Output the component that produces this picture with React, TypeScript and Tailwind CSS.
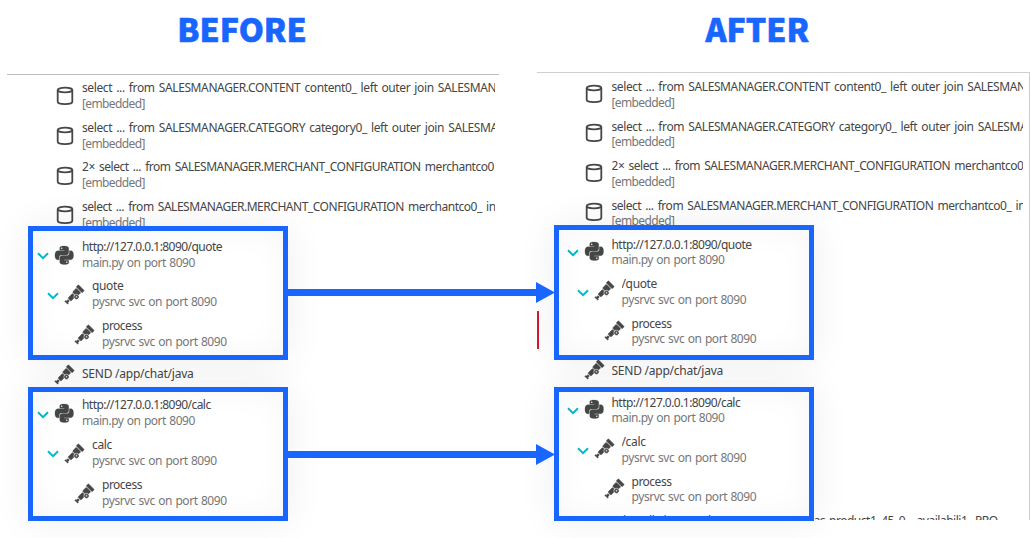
import { SiOpentelemetry, SiPython } from "react-icons/si";

type Kind = "db" | "python" | "otel";
type Entry = {
  kind: Kind;
  title: string;
  titleClass: string;
  sub?: string;
  subClass?: string;
  level?: 0 | 1 | 2;
  open?: boolean;
};

const SQL = "tracking-[-0.39px] [word-spacing:1.4px]";
const SQL_TIGHT = "tracking-[-0.47px] [word-spacing:1.5px]";
const EMB = { sub: "[embedded]", subClass: "tracking-[-0.62px]" };
const MAIN = { sub: "main.py on port 8090", subClass: "tracking-[-0.5px] [word-spacing:0.8px]" };
const SVC = { sub: "pysrvc svc on port 8090", subClass: "tracking-[-0.44px] [word-spacing:0.7px]" };
const URL_CLASS = "tracking-[-0.55px]";

function entries(prefix: string): Entry[] {
  return [
    { kind: "db", title: "select ... from SALESMANAGER.CONTENT content0_ left outer join SALESMAN", titleClass: SQL, ...EMB },
    { kind: "db", title: "select ... from SALESMANAGER.CATEGORY category0_ left outer join SALESMA", titleClass: SQL, ...EMB },
    { kind: "db", title: "2× select ... from SALESMANAGER.MERCHANT_CONFIGURATION merchantco0", titleClass: SQL_TIGHT, ...EMB },
    { kind: "db", title: "select ... from SALESMANAGER.MERCHANT_CONFIGURATION merchantco0_ in", titleClass: SQL_TIGHT, ...EMB },
    { kind: "python", title: "http://127.0.0.1:8090/quote", titleClass: URL_CLASS, ...MAIN, open: true },
    { kind: "otel", title: prefix + "quote", titleClass: "tracking-[-0.35px]", ...SVC, level: 1, open: true },
    { kind: "otel", title: "process", titleClass: "tracking-[-0.5px]", ...SVC, level: 2 },
    { kind: "otel", title: "SEND /app/chat/java", titleClass: "tracking-[-0.24px]" },
    { kind: "python", title: "http://127.0.0.1:8090/calc", titleClass: URL_CLASS, ...MAIN, open: true },
    { kind: "otel", title: prefix + "calc", titleClass: "tracking-[-0.35px]", ...SVC, level: 1, open: true },
    { kind: "otel", title: "process", titleClass: "tracking-[-0.5px]", ...SVC, level: 2 },
  ];
}

const LAST: Entry = {
  kind: "db",
  title: "select distinct product0_.PRODUCT_ID as product1_45_0_, availabili1_.PRO",
  titleClass: "tracking-[-0.47px] [word-spacing:1px]",
  ...EMB,
};

const INDENT = ["pl-[31px]", "pl-[41px]", "pl-[51px]"];

function Icon({ kind }: { kind: Kind }) {
  if (kind === "python") return <SiPython className="size-[18.5px] overflow-visible" stroke="currentColor" strokeWidth="0.3" />;
  if (kind === "otel") return <SiOpentelemetry className="size-[19px] overflow-visible" stroke="currentColor" strokeWidth="0.8" />;
  return (
    <svg className="size-5" viewBox="0 0 20 20" fill="none" stroke="currentColor" strokeWidth="1.8">
      <ellipse cx="10" cy="4" rx="7.3" ry="2.4" />
      <path d="M2.7 4v11.8c0 1.3 3 2.3 7.3 2.3s7.3-1 7.3-2.3V4" />
    </svg>
  );
}

function Row({ entry, compact }: { entry: Entry; compact: boolean }) {
  return (
    <div className={`flex shrink-0 items-center ${compact ? "h-[39.45px]" : "h-[39.68px]"} ${INDENT[entry.level ?? 0]}`}>
      <svg
        className={`h-2 w-2.5 shrink-0 overflow-visible text-[#00b9cc] ${compact ? "mt-0.5" : "mt-[3px]"}`}
        viewBox="0 0 10 8"
        fill="none"
        stroke="currentColor"
        strokeWidth="2"
      >
        {entry.open && <path d="M0 1.3 5 6.2 10 1.3" />}
      </svg>
      <span
        className={`ml-[6.5px] mr-[0.5px] flex size-5 shrink-0 items-center justify-center text-[#454646] ${
          compact ? "mb-0.5" : "mt-px"
        }`}
      >
        <Icon kind={entry.kind} />
      </span>
      <div
        className={`ml-[7px] min-w-0 flex-1 overflow-hidden whitespace-nowrap text-[12px] ${
          compact ? "leading-[15.5px]" : "leading-4"
        }`}
      >
        <div className={`text-[#454646] ${entry.titleClass}`}>{entry.title}</div>
        {entry.sub && <div className={`text-[#777777] ${entry.subClass}`}>{entry.sub}</div>}
      </div>
    </div>
  );
}

function Highlight({ className }: { className: string }) {
  return (
    <div
      className={`pointer-events-none absolute w-[260px] border-5 border-[#1966ff] shadow-[0_0_36px_rgba(0,0,0,0.07),inset_0_0_32px_rgba(0,0,0,0.04)] ${className}`}
    />
  );
}

export default function App() {
  return (
    <div className="relative h-[538px] w-[1031px] overflow-hidden bg-white font-['Noto_Sans',sans-serif]">
      <div className="flex items-start">
        <section className="ml-[7px] w-[492px]">
          <h1 className="flex h-[74px] items-center justify-center pb-[19px] pr-[22px] font-['Noto_Sans_CJK_SC',sans-serif] text-[32px] font-black leading-none text-[#1966ff] [-webkit-text-stroke:0.6px_#1966ff]">
            BEFORE
          </h1>
          <div className="flex h-[447px] flex-col overflow-hidden border-t border-[#bdbdbd] pr-1 pt-px">
            {entries("").map((e, i) => (
              <Row key={i} entry={e} compact={false} />
            ))}
          </div>
        </section>
        <section className="ml-[37.5px] w-[493.5px]">
          <h1 className="flex h-[72px] items-center justify-center pb-[17px] pr-[52px] font-['Noto_Sans_CJK_SC',sans-serif] text-[32px] font-black leading-none text-[#1966ff] [-webkit-text-stroke:0.6px_#1966ff]">
            AFTER
          </h1>
          <div className="flex h-[448px] flex-col overflow-hidden border-r border-t border-[#cfcfcf] pr-[6px] pt-[2px]">
            {[...entries("/"), LAST].map((e, i) => (
              <Row key={i} entry={e} compact />
            ))}
          </div>
        </section>
      </div>

      <Highlight className="left-[28px] top-[226px] h-[134px]" />
      <Highlight className="left-[28px] top-[387px] h-[134px]" />
      <Highlight className="left-[554px] top-[225px] h-[135px]" />
      <Highlight className="left-[554px] top-[387px] h-[134px]" />

      <svg className="absolute left-[288px] top-[282px] h-[21px] w-[268px]" viewBox="0 0 268 21" fill="#1966ff">
        <path d="M0 7h248V0l19 10.5L248 21v-7H0z" />
      </svg>
      <svg className="absolute left-[288px] top-[444px] h-[21px] w-[268px]" viewBox="0 0 268 21" fill="#1966ff">
        <path d="M0 7h248V0l19 10.5L248 21v-7H0z" />
      </svg>
      <div className="absolute left-[537px] top-[311px] h-[38px] w-[2px] bg-[#d2162e]" />
    </div>
  );
}
